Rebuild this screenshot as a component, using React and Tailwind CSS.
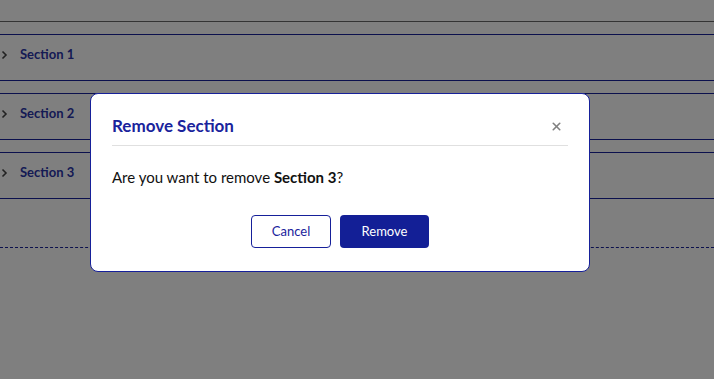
import { X } from "lucide-react";

const sections = ["Section 1", "Section 2", "Section 3"];

const ChevronRight = () => (
  <svg width="7" height="10" viewBox="0 0 7 10" fill="none">
    <path d="M1.5 1.5 L5 5 L1.5 8.5" stroke="#444" strokeWidth="1.6" />
  </svg>
);

export default function App() {
  return (
    <div
      className="relative h-[379px] w-full overflow-hidden bg-white"
      style={{ fontFamily: "Lato, 'Liberation Sans', sans-serif" }}
    >
      {/* page behind the modal */}
      <div className="pt-[21px]">
        <div className="border-t border-[#666]" />
        <div className="mt-[12px] flex flex-col gap-[12px]">
          {sections.map((s) => (
            <div
              key={s}
              className="flex h-[47px] items-center border-y border-[#16209a] pb-[5px]"
            >
              <div className="flex w-[20px] pl-[1px]">
                <ChevronRight />
              </div>
              <span className="text-[13px] font-bold text-[#2a34a8]">{s}</span>
            </div>
          ))}
        </div>
        <div className="mt-[48px] border-t border-dashed border-[#16209a]" />
      </div>

      {/* overlay */}
      <div className="absolute inset-0 bg-black/50" />

      {/* modal */}
      <div className="absolute left-[90px] top-[93px] w-[500px] rounded-[8px] border border-[#16209a] bg-white px-[21px] pb-[23px] pt-[20px]">
        <div className="flex h-[24px] items-center justify-between">
          <h2 className="text-[17px] font-bold text-[#1a239c]">Remove Section</h2>
          <X size={13} strokeWidth={3} className="mr-[5px] text-[#808080]" />
        </div>
        <div className="mt-[7px] border-t border-[#e0e0e0]" />
        <p className="mt-[19px] h-[24px] text-[15px] leading-[24px] text-[#111]">
          Are you want to remove <span className="font-bold">Section 3</span>?
        </p>
        <div className="mt-[26px] flex justify-center gap-[9px]">
          <button className="h-[33px] w-[80px] rounded-[4px] border border-[#16209a] bg-white text-[13px] text-[#1a239c]">
            Cancel
          </button>
          <button className="h-[33px] w-[89px] rounded-[4px] bg-[#131f96] text-[13px] text-white">
            Remove
          </button>
        </div>
      </div>
    </div>
  );
}
